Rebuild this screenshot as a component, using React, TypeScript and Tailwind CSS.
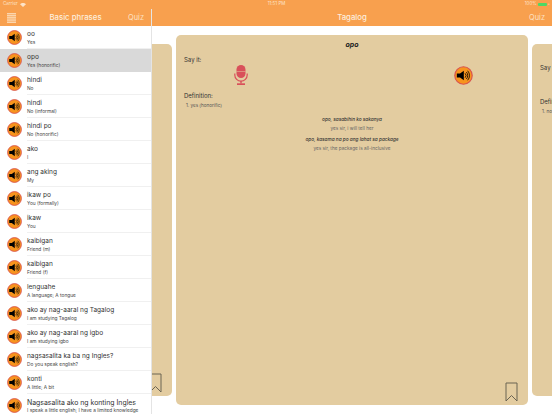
const phrases = [
  { word: "oo", meaning: "Yes" },
  { word: "opo", meaning: "Yes (honorific)" },
  { word: "hindi", meaning: "No" },
  { word: "hindi", meaning: "No (informal)" },
  { word: "hindi po", meaning: "No (honorific)" },
  { word: "ako", meaning: "I" },
  { word: "ang aking", meaning: "My" },
  { word: "ikaw po", meaning: "You (formally)" },
  { word: "ikaw", meaning: "You" },
  { word: "kaibigan", meaning: "Friend (m)" },
  { word: "kaibigan", meaning: "Friend (f)" },
  { word: "lenguahe", meaning: "A language; A tongue" },
  { word: "ako ay nag-aaral ng Tagalog", meaning: "I am studying Tagalog" },
  { word: "ako ay nag-aaral ng igbo", meaning: "I am studying igbo" },
  { word: "nagsasalita ka ba ng Ingles?", meaning: "Do you speak english?" },
  { word: "konti", meaning: "A little; A bit" },
  { word: "Nagsasalita ako ng konting Ingles", meaning: "I speak a little english; I have a limited knowledge" },
];

function SpeakerIcon({ size = 15 }: { size?: number }) {
  return (
    <svg width={size} height={size} viewBox="0 0 30 30" className="shrink-0">
      <circle cx="15" cy="15" r="13.8" fill="#f7941d" stroke="#d9534f" strokeWidth="1.8" />
      <path d="M4.5 12h5l6-4.5v15l-6-4.5h-5z" fill="#000" />
      <g fill="none" stroke="#000" strokeWidth="1.3">
        <path d="M17.5 11.5a5 5 0 0 1 0 7" />
        <path d="M19.5 9.5a8 8 0 0 1 0 11" />
        <path d="M21.5 7.5a11 11 0 0 1 0 15" />
      </g>
    </svg>
  );
}

function MicIcon() {
  return (
    <svg width="14" height="20" viewBox="0 0 14 20">
      <rect x="2.5" y="0" width="9" height="13" rx="4.5" fill="#d9505a" />
      <path d="M2.5 6.5h9" stroke="#e3cca0" strokeWidth="0.5" />
      <path d="M0.8 8.5v1.5a6.2 6.2 0 0 0 12.4 0V8.5" fill="none" stroke="#d9505a" strokeWidth="1.2" />
      <path d="M7 16v2.5" stroke="#d9505a" strokeWidth="1.4" />
      <rect x="3" y="18.3" width="8" height="1.7" fill="#d9505a" />
    </svg>
  );
}

function BookmarkIcon() {
  return (
    <svg width="13" height="20" viewBox="0 0 13 20" fill="none">
      <path d="M1 1h11v18l-5.5-5.5L1 19z" stroke="#6b6453" strokeWidth="1" />
    </svg>
  );
}

function NavBar({ title, menu }: { title: string; menu?: boolean }) {
  return (
    <div className="grid h-[17px] shrink-0 grid-cols-[1fr_auto_1fr] items-center bg-[#f8a04e] pl-[7px] pr-[7px]">
      <div>
        {menu && (
          <svg width="9" height="10" viewBox="0 0 9 10">
            <g fill="#fbd6ae">
              <rect y="0" width="9" height="1.3" />
              <rect y="1.8" width="9" height="1.3" />
              <rect y="3.6" width="9" height="1.3" />
              <rect y="5.4" width="9" height="1.3" />
              <rect y="7.2" width="9" height="1.3" />
              <rect y="9" width="9" height="1" />
            </g>
          </svg>
        )}
      </div>
      <div className="text-[7.8px] font-medium text-[#fdeedd]">{title}</div>
      <div className="text-right text-[7.4px] text-[#fde0c2]">Quiz</div>
    </div>
  );
}

function SideCard({ showText }: { showText?: boolean }) {
  return (
    <div className="mt-[9px] flex h-[352px] w-[352px] shrink-0 flex-col rounded-[5px] bg-[#e3cca0] px-2 pb-[3px] pt-[19px] text-[#333]">
      {showText && (
        <>
          <div className="text-[6px] leading-[9px]">Say it:</div>
          <div className="mt-[25px] text-[6px] leading-[9px]">Definition:</div>
          <div className="mt-[1px] pl-[2px] text-[4.6px] leading-[9px] text-[#555]">1. no</div>
        </>
      )}
      <div className="mt-auto flex justify-end pr-[2px]">
        <BookmarkIcon />
      </div>
    </div>
  );
}

export default function App() {
  return (
    <div className="flex h-[414px] w-[552px] flex-col overflow-hidden bg-white font-['Inter',sans-serif]">
      {/* status bar */}
      <div className="grid h-[9px] shrink-0 grid-cols-3 items-center bg-[#f8a04e] pl-[3px] pr-[2px] text-[4.5px] text-[#fde3c8]">
        <div className="flex items-center gap-[2px]">
          Carrier
          <svg width="6" height="4" viewBox="0 0 6 4">
            <path d="M0 1.3a4.3 4.3 0 0 1 6 0L3 4z" fill="#fde3c8" />
          </svg>
        </div>
        <div className="text-center">11:51 PM</div>
        <div className="flex items-center justify-end gap-[1px]">
          100%
          <span className="h-[3px] w-[9px] rounded-[1px] bg-[#4cd964]" />
          <span className="text-[3.5px]">+</span>
        </div>
      </div>

      <div className="flex min-h-0 flex-1">
        {/* phrase list */}
        <div className="relative z-10 flex w-[152px] shrink-0 flex-col border-r border-[#e4e4e4] bg-white">
          <NavBar title="Basic phrases" menu />
          <div className="min-h-0 flex-1 overflow-hidden">
            {phrases.map((p, i) => (
              <div
                key={i}
                className={`flex h-[23px] items-center gap-[5px] pl-[7px] ${i === 1 ? "bg-[#d9d9d9]" : ""}`}
              >
                <SpeakerIcon />
                <div className={`flex h-full min-w-0 flex-1 flex-col justify-center whitespace-nowrap ${i === 1 ? "" : "border-b border-[#f0f0f0]"}`}>
                  <div className={`${i === 16 ? "text-[6.9px]" : "text-[6.5px]"} pt-[1px] leading-[9px] text-[#333]`}>{p.word}</div>
                  <div className="text-[4.8px] leading-[7px] text-[#444]">{p.meaning}</div>
                </div>
              </div>
            ))}
          </div>
        </div>

        {/* word cards */}
        <div className="flex min-w-0 flex-1 flex-col">
          <NavBar title="Tagalog" />
          <div className="flex flex-1 justify-center gap-[4px] overflow-hidden pt-[9px]">
            <SideCard />
            <div className="flex h-[370px] w-[352px] shrink-0 flex-col rounded-[5px] bg-[#e3cca0] px-2 pb-[3px] pt-[5px] text-[#333]">
              <div className="text-center text-[7px] font-bold italic leading-[10px] text-[#222]">opo</div>
              <div className="mt-[5px] text-[6px] leading-[10px]">Say it:</div>
              <div className="flex h-[20px] items-center justify-between pl-[50px] pr-[47px]">
                <MicIcon />
                <SpeakerIcon size={19} />
              </div>
              <div className="mt-[6px] text-[6px] leading-[10px]">Definition:</div>
              <div className="pl-[2px] text-[4.6px] leading-[10px] text-[#555]">1. yes (honorific)</div>
              <div className="mt-[4px] flex flex-col items-center text-[4.7px]">
                <div className="font-medium italic leading-[9px] text-[#333]">opo, sasabihin ko sakanya</div>
                <div className="leading-[9px] text-[#666]">yes sir, i will tell her</div>
                <div className="mt-[2px] font-medium italic leading-[9px] text-[#333]">opo, kasama na po ang lahat sa package</div>
                <div className="leading-[9px] text-[#666]">yes sir, the package is all-inclusive</div>
              </div>
              <div className="mt-auto flex justify-end pr-[2px]">
                <BookmarkIcon />
              </div>
            </div>
            <SideCard showText />
          </div>
        </div>
      </div>
    </div>
  );
}
